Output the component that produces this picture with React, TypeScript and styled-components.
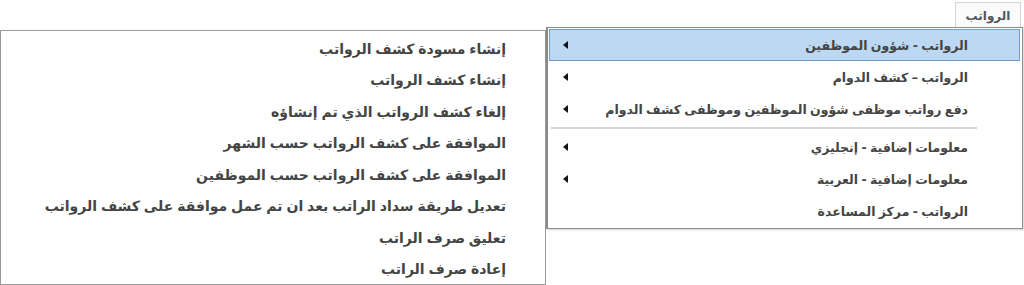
import React from "react";
import styled, { createGlobalStyle } from "styled-components";

const GlobalStyle = createGlobalStyle`
  html, body {
    margin: 0;
    padding: 0;
    background: #ffffff;
    overflow: hidden;
  }
  body {
    font-family: "DejaVu Sans", "Noto Sans", sans-serif;
  }
`;

const Page = styled.div`
  width: 1024px;
  height: 285px;
  background: #ffffff;
`;

const TopBar = styled.div`
  display: flex;
  justify-content: flex-end;
  height: 27px;
  padding: 2px 3px 0 0;
  box-sizing: border-box;
`;

const MenuButton = styled.div`
  width: 66px;
  height: 26px;
  box-sizing: border-box;
  border: 1px solid #d4d4d4;
  border-bottom: none;
  background: #fbfbfb;
  display: flex;
  align-items: center;
  justify-content: center;
  direction: rtl;
  font-size: 12px;
  font-weight: bold;
  color: #555;
`;

const MenusRow = styled.div`
  display: flex;
  align-items: flex-start;
  padding-right: 3px;
`;

const SubPanel = styled.div`
  width: 546px;
  height: 255px;
  margin-top: 3px;
  box-sizing: border-box;
  border: 1px solid #9a9a9a;
  background: #ffffff;
  padding-top: 2px;
  direction: rtl;
  flex-shrink: 0;
`;

const MainPanel = styled.div`
  width: 477px;
  height: 202px;
  margin-right: -1px;
  box-sizing: border-box;
  border: 1px solid #8e8e8e;
  border-left: 2px solid #8a8a8a;
  background: #ffffff;
  padding: 1px 2px 0 1px;
  direction: rtl;
  box-shadow: 1px 1px 2px rgba(0, 0, 0, 0.18);
  flex-shrink: 0;
  position: relative;
  z-index: 1;
`;

const SubItem = styled.div`
  height: 31.5px;
  display: flex;
  align-items: center;
  padding-right: 39px;
  font-size: 14px;
  font-weight: bold;
  word-spacing: -1px;
  color: #444;
  white-space: nowrap;
`;

const MainItem = styled.div<{ $active?: boolean }>`
  height: 32px;
  box-sizing: border-box;
  display: flex;
  align-items: center;
  justify-content: space-between;
  padding: 0 51px 0 13px;
  font-size: 12.5px;
  font-weight: bold;
  word-spacing: -1px;
  color: #444;
  white-space: nowrap;
  border: 1px solid ${(p) => (p.$active ? "#6f9fd2" : "transparent")};
  background: ${(p) => (p.$active ? "#bcd8f2" : "transparent")};
`;

const Arrow = styled.span`
  width: 0;
  height: 0;
  flex-shrink: 0;
  border-top: 4px solid transparent;
  border-bottom: 4px solid transparent;
  border-right: 5px solid #111;
`;

const Separator = styled.div`
  height: 2px;
  margin: 2px 43px 2px 2px;
  background: #d6d6d6;
`;

const mainItems = [
  { label: "الرواتب - شؤون الموظفين", arrow: true, active: true },
  { label: "الرواتب – كشف الدوام", arrow: true },
  { label: "دفع رواتب موظفى شؤون الموظفين وموظفى كشف الدوام", arrow: true },
  { sep: true },
  { label: "معلومات إضافية - إنجليزي", arrow: true },
  { label: "معلومات إضافية - العربية", arrow: true },
  { label: "الرواتب - مركز المساعدة", arrow: false },
];

const subItems = [
  "إنشاء مسودة كشف الرواتب",
  "إنشاء كشف الرواتب",
  "إلغاء كشف الرواتب الذي تم إنشاؤه",
  "الموافقة على كشف الرواتب حسب الشهر",
  "الموافقة على كشف الرواتب حسب الموظفين",
  "تعديل طريقة سداد الراتب بعد ان تم عمل موافقة على كشف الرواتب",
  "تعليق صرف الراتب",
  "إعادة صرف الراتب",
];

export default function App() {
  return (
    <Page>
      <GlobalStyle />
      <TopBar>
        <MenuButton>الرواتب</MenuButton>
      </TopBar>
      <MenusRow>
        <SubPanel>
          {subItems.map((s) => (
            <SubItem key={s}>{s}</SubItem>
          ))}
        </SubPanel>
        <MainPanel>
          {mainItems.map((m, i) =>
            m.sep ? (
              <Separator key={i} />
            ) : (
              <MainItem key={i} $active={m.active}>
                <span>{m.label}</span>
                {m.arrow ? <Arrow /> : <span />}
              </MainItem>
            )
          )}
        </MainPanel>
      </MenusRow>
    </Page>
  );
}
